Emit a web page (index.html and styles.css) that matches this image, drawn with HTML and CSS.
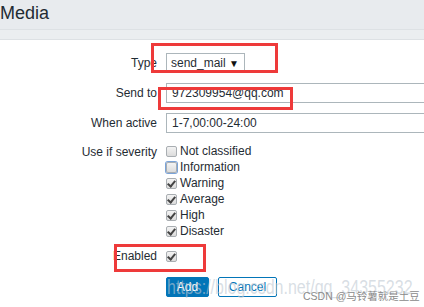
FILE: index.html
```html
<!DOCTYPE html>
<html>
<head>
<meta charset="utf-8">
<link rel="stylesheet" href="styles.css">
</head>
<body>
<div class="page">
  <header class="title">Media</header>
  <div class="band"></div>
  <div class="form">
    <div class="label">Type</div>
    <div class="field"><div class="select"><span>send_mail</span><span class="arrow">▼</span></div></div>

    <div class="label">Send to</div>
    <div class="field"><div class="input">972309954@qq.com</div></div>

    <div class="label">When active</div>
    <div class="field"><div class="input">1-7,00:00-24:00</div></div>

    <div class="label top">Use if severity</div>
    <div class="field">
      <ul class="checks">
        <li><span class="cb"></span>Not classified</li>
        <li><span class="cb focus"></span>Information</li>
        <li><span class="cb on"></span>Warning</li>
        <li><span class="cb on"></span>Average</li>
        <li><span class="cb on"></span>High</li>
        <li><span class="cb on"></span>Disaster</li>
      </ul>
    </div>

    <div class="label enabled">Enabled</div>
    <div class="field enabled"><span class="cb on"></span></div>

    <div class="label"></div>
    <div class="field buttons">
      <button class="btn primary">Add</button>
      <button class="btn alt">Cancel</button>
    </div>
  </div>

  <div class="mark r1"></div>
  <div class="mark r2"></div>
  <div class="mark r3"></div>
  <div class="watermark">https://blog.csdn.net/qq_34355232</div>
  <div class="csdn">CSDN @马铃薯就是土豆</div>
</div>
</body>
</html>
```

FILE: styles.css
```css
html, body {
  margin: 0;
  padding: 0;
  background: #ffffff;
  overflow: hidden;
}
.page {
  position: relative;
  width: 424px;
  height: 307px;
  overflow: hidden;
  font-family: "Liberation Sans", Arial, sans-serif;
  font-size: 12px;
  color: #1f2c33;
}
.title {
  height: 29px;
  background: #e8ebee;
  border-bottom: 1px solid #dde1e4;
  font-size: 18px;
  line-height: 26px;
  padding-left: 0;
  color: #1f2c33;
}
.band {
  height: 9px;
  background: #ebeef0;
  border-bottom: 1px solid #dde1e4;
}
.form {
  display: grid;
  grid-template-columns: 157px 1fr;
  column-gap: 9px;
  row-gap: 10px;
  padding-top: 13px;
  align-items: center;
}
.label {
  text-align: right;
  white-space: nowrap;
}
.label.top {
  align-self: start;
  padding-top: 2px;
}
.field {
  white-space: nowrap;
}
.select {
  box-sizing: border-box;
  width: 79px;
  height: 20px;
  border: 1px solid #acb6bb;
  display: flex;
  align-items: center;
  justify-content: space-between;
  padding: 0 5px 0 4px;
  background: #fff;
}
.arrow {
  font-size: 10px;
  color: #111;
}
.input {
  box-sizing: border-box;
  width: 300px;
  height: 20px;
  border: 1px solid #acb6bb;
  border-right: none;
  padding: 0 5px;
  line-height: 18px;
  background: #fff;
}
.checks {
  list-style: none;
  margin: 0;
  padding: 0;
}
.checks li {
  height: 16px;
  display: flex;
  align-items: center;
}
.cb {
  box-sizing: border-box;
  display: inline-block;
  width: 11px;
  height: 11px;
  border: 1px solid #a9aeb2;
  border-radius: 2px;
  background: linear-gradient(#f3f3f3, #dcdcdc);
  margin-right: 3px;
  position: relative;
  flex: none;
}
.cb.focus {
  box-shadow: 0 0 0 1px #7aa3d8;
}
.cb.on::after {
  content: "";
  position: absolute;
  left: 2px;
  top: 0px;
  width: 3px;
  height: 6px;
  border-right: 2px solid #444;
  border-bottom: 2px solid #444;
  transform: rotate(40deg);
}
.field.enabled {
  display: flex;
  align-items: center;
  height: 14px;
}
.buttons {
  display: flex;
  gap: 9px;
  margin-top: 4px;
}
.btn {
  box-sizing: border-box;
  height: 20px;
  font-family: "Liberation Sans", Arial, sans-serif;
  font-size: 12px;
  padding: 0 8px;
  border-radius: 2px;
  cursor: pointer;
}
.btn.primary {
  width: 43px;
  background: #0275b8;
  border: 1px solid #0275b8;
  color: #fff;
}
.btn.alt {
  width: 59px;
  background: #fff;
  border: 1px solid #0275b8;
  color: #0275b8;
}
.mark {
  position: absolute;
  box-sizing: border-box;
  border: 3px solid #ee3a3a;
}
.r1 { left: 151px; top: 43px; width: 127px; height: 30px; }
.r2 { left: 158px; top: 87px; width: 135px; height: 23px; }
.r3 { left: 114px; top: 244px; width: 92px; height: 28px; }
.watermark {
  position: absolute;
  left: 167px;
  top: 276px;
  font-size: 16px;
  transform: scaleY(1.3);
  transform-origin: top left;
  color: rgba(190, 200, 210, 0.6);
  white-space: nowrap;
}
.csdn {
  position: absolute;
  left: 303px;
  top: 288px;
  font-family: "Liberation Sans", "Noto Sans CJK SC", sans-serif;
  font-size: 10.5px;
  color: #8a8a8a;
  white-space: nowrap;
}
```
